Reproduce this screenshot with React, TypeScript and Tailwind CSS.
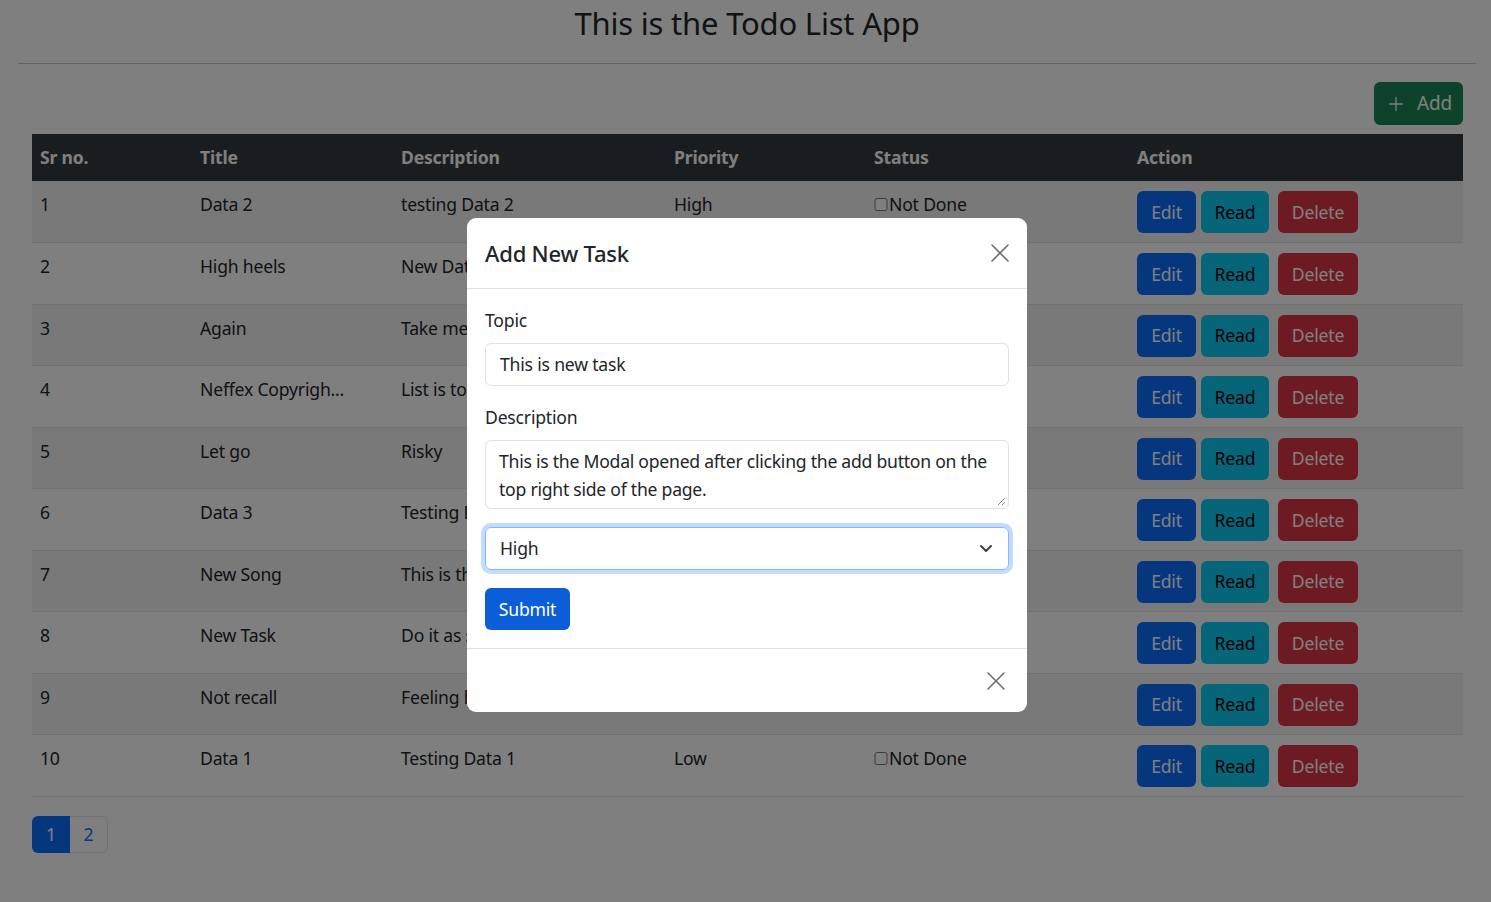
import React from 'react';
import { Plus } from 'lucide-react';

interface Task {
  id: number;
  title: string;
  description: string;
  priority: string;
  done: boolean;
}

const tasks: Task[] = [
  { id: 1, title: 'Data 2', description: 'testing Data 2', priority: 'High', done: false },
  { id: 2, title: 'High heels', description: 'New Data for test', priority: 'Medium', done: false },
  { id: 3, title: 'Again', description: 'Take me back', priority: 'Low', done: false },
  { id: 4, title: 'Neffex Copyrigh...', description: 'List is too long', priority: 'High', done: false },
  { id: 5, title: 'Let go', description: 'Risky', priority: 'Medium', done: false },
  { id: 6, title: 'Data 3', description: 'Testing Data 3', priority: 'Low', done: false },
  { id: 7, title: 'New Song', description: 'This is the song', priority: 'High', done: false },
  { id: 8, title: 'New Task', description: 'Do it as soon', priority: 'Medium', done: false },
  { id: 9, title: 'Not recall', description: 'Feeling happy', priority: 'Low', done: false },
  { id: 10, title: 'Data 1', description: 'Testing Data 1', priority: 'Low', done: false },
];

const font = { fontFamily: '"Noto Sans", "Open Sans", sans-serif' };

function CloseIcon() {
  return (
    <svg width="20" height="20" viewBox="0 0 20 20" fill="none" stroke="#6c6c6c" strokeWidth="1.6" strokeLinecap="round">
      <path d="M2 2L18 18M18 2L2 18" />
    </svg>
  );
}

function TodoTable() {
  return (
    <table className="w-full table-fixed border-collapse text-[17.6px] text-[#212529]">
      <thead>
        <tr className="h-[47px] bg-[#343a40] text-white">
          <th className="w-[160px] px-[8px] text-left font-bold">Sr no.</th>
          <th className="w-[201px] px-[8px] text-left font-bold">Title</th>
          <th className="w-[273px] px-[8px] text-left font-bold">Description</th>
          <th className="w-[200px] px-[8px] text-left font-bold">Priority</th>
          <th className="w-[263px] px-[8px] text-left font-bold">Status</th>
          <th className="px-[8px] text-left font-bold">Action</th>
        </tr>
      </thead>
      <tbody>
        {tasks.map((t, i) => (
          <tr key={t.id} className={`h-[61.5px] border-b border-[#dee2e6] ${i % 2 === 0 ? 'bg-[#f2f2f2]' : 'bg-white'}`}>
            <td className="px-[8px] pt-[10px] align-top leading-[26px]">{t.id}</td>
            <td className="px-[8px] pt-[10px] align-top leading-[26px] whitespace-nowrap">{t.title}</td>
            <td className="px-[8px] pt-[10px] align-top leading-[26px] whitespace-nowrap">{t.description}</td>
            <td className="px-[8px] pt-[10px] align-top leading-[26px]">{t.priority}</td>
            <td className="px-[8px] pt-[10px] align-top leading-[26px]">
              <label className="flex items-center">
                <input type="checkbox" defaultChecked={t.done} className="m-0 h-[13px] w-[14px]" />
                <span className="ml-[1px]">Not Done</span>
              </label>
            </td>
            <td className="px-[8px] pt-[10px] align-top">
              <div className="flex items-center">
                <button className="h-[42px] w-[59px] rounded-[6px] bg-[#0d6efd] text-white">Edit</button>
                <button className="ml-[5px] h-[42px] w-[68px] rounded-[6px] bg-[#0dcaf0] text-black">Read</button>
                <button className="ml-[9px] h-[42px] w-[80px] rounded-[6px] bg-[#dc3545] text-white">Delete</button>
              </div>
            </td>
          </tr>
        ))}
      </tbody>
    </table>
  );
}

function AddTaskModal() {
  return (
    <div className="fixed inset-0 flex justify-center pt-[218px] pl-[3px]">
      <div className="h-[494px] w-[560px] rounded-[9px] bg-white text-[17.6px] text-[#212529]">
        <div className="flex h-[71px] items-center justify-between border-b border-[#dee2e6] pl-[18px] pr-[17px]">
          <h5 className="text-[22px] font-medium">Add New Task</h5>
          <CloseIcon />
        </div>
        <div className="px-[18px] pt-[18px]">
          <div className="leading-[26px]">Topic</div>
          <div className="mt-[10px] flex h-[43px] items-center rounded-[6px] border border-[#dee2e6] px-[14px]">This is new task</div>
          <div className="mt-[18px] leading-[26px]">Description</div>
          <div className="relative mt-[10px] h-[69px] rounded-[6px] border border-[#dee2e6] px-[13px] pt-[6px] leading-[28px] tracking-[-0.25px]">
            This is the Modal opened after clicking the add button on the top right side of the page.
            <svg className="absolute bottom-[2px] right-[2px]" width="9" height="9" viewBox="0 0 9 9" stroke="#8a8a8a" strokeWidth="1">
              <path d="M8 1L1 8M8 5L5 8" />
            </svg>
          </div>
          <div className="mt-[18px] flex h-[43px] items-center justify-between rounded-[6px] border border-[#86b7fe] pl-[14px] pr-[16px] shadow-[0_0_0_4px_rgba(13,110,253,0.25)]">
            <span>High</span>
            <svg width="12" height="7" viewBox="0 0 12 7" fill="none" stroke="#343a40" strokeWidth="1.8" strokeLinecap="round" strokeLinejoin="round">
              <path d="M1 1L6 6L11 1" />
            </svg>
          </div>
          <button className="mt-[18px] h-[42px] w-[85px] rounded-[6px] bg-[#0b5ed7] text-white">Submit</button>
        </div>
        <div className="mt-[18px] flex h-[64px] items-center justify-end border-t border-[#dee2e6] pr-[21px]">
          <CloseIcon />
        </div>
      </div>
    </div>
  );
}

export default function App() {
  return (
    <div className="relative min-h-[902px] bg-white tracking-[-0.2px]" style={font}>
      <div className="pl-[18px] pr-[15px]">
        <h1 className="pt-[3px] text-center text-[31px] leading-[40px] text-[#212529]">This is the Todo List App</h1>
        <hr className="mt-[20px] border-t border-[#c7c8c9]" />
        <div className="pl-[14px] pr-[13px]">
          <div className="flex justify-end pt-[18px] pb-[9px]">
            <button className="flex h-[43px] w-[89px] items-center justify-center gap-[10px] rounded-[6px] bg-[#198754] text-[19px] text-white">
              <Plus size={22} strokeWidth={1.4} />
              <span>Add</span>
            </button>
          </div>
          <TodoTable />
          <div className="mt-[19px] flex h-[37px] text-[17.6px]">
            <div className="flex w-[38px] items-center justify-center rounded-l-[6px] bg-[#0d6efd] text-white">1</div>
            <div className="flex w-[38px] items-center justify-center rounded-r-[6px] border border-l-0 border-[#dee2e6] text-[#0d6efd]">2</div>
          </div>
        </div>
      </div>
      <div className="fixed inset-0 bg-black/50" />
      <AddTaskModal />
    </div>
  );
}
